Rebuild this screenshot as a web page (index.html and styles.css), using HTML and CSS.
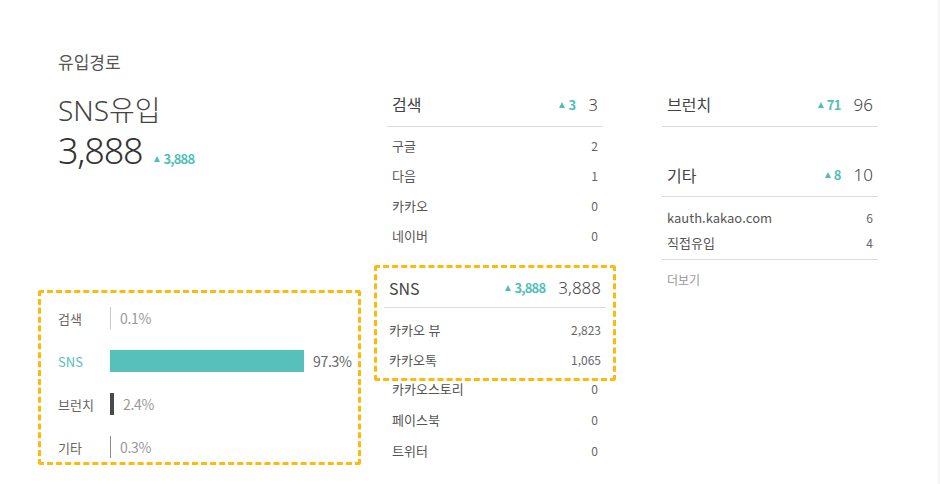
FILE: index.html
```html
<!DOCTYPE html>
<html lang="ko">
<head>
<meta charset="utf-8">
<link rel="stylesheet" href="styles.css">
</head>
<body>
<div class="page">
  <div class="left">
    <div class="summary">
      <div class="title">유입경로</div>
      <div class="big-name">SNS유입</div>
      <div class="big-num"><span class="num">3,888</span><span class="up">3,888</span></div>
    </div>
    <div class="chart">
      <div class="crow"><span class="clabel">검색</span><span class="bar bar-thin light"></span><span class="cval">0.1%</span></div>
      <div class="crow"><span class="clabel teal">SNS</span><span class="bar bar-sns" style="width:194px"></span><span class="cval dark">97.3%</span></div>
      <div class="crow"><span class="clabel">브런치</span><span class="bar bar-br"></span><span class="cval">2.4%</span></div>
      <div class="crow"><span class="clabel">기타</span><span class="bar bar-thin mid"></span><span class="cval">0.3%</span></div>
    </div>
  </div>

  <div class="col mid-col">
    <div class="sec">
      <div class="head"><span class="hname">검색</span><span class="up">3</span><span class="htotal">3</span></div>
      <div class="rows">
        <div class="row"><span>구글</span><span class="v">2</span></div>
        <div class="row"><span>다음</span><span class="v">1</span></div>
        <div class="row"><span>카카오</span><span class="v">0</span></div>
        <div class="row"><span>네이버</span><span class="v">0</span></div>
      </div>
    </div>
    <div class="hl">
      <div class="head head-hl"><span class="hname">SNS</span><span class="up">3,888</span><span class="htotal">3,888</span></div>
      <div class="rows rows-hl">
        <div class="row"><span>카카오 뷰</span><span class="v">2,823</span></div>
        <div class="row"><span>카카오톡</span><span class="v">1,065</span></div>
      </div>
    </div>
    <div class="rows rows-after">
      <div class="row row31"><span>카카오스토리</span><span class="v">0</span></div>
      <div class="row row31"><span>페이스북</span><span class="v">0</span></div>
      <div class="row row31"><span>트위터</span><span class="v">0</span></div>
    </div>
  </div>

  <div class="col right-col">
    <div class="sec">
      <div class="head"><span class="hname">브런치</span><span class="up">71</span><span class="htotal">96</span></div>
    </div>
    <div class="sec sec-etc">
      <div class="head"><span class="hname">기타</span><span class="up">8</span><span class="htotal">10</span></div>
      <div class="rows rows-etc">
        <div class="row row25"><span>kauth.kakao.com</span><span class="v">6</span></div>
        <div class="row row25"><span>직접유입</span><span class="v">4</span></div>
      </div>
      <div class="more">더보기</div>
    </div>
  </div>
</div>
</body>
</html>
```

FILE: styles.css
```css
* { box-sizing: border-box; }
html, body { margin: 0; padding: 0; background: #fff; }
body {
  font-family: "Noto Sans CJK KR", "Noto Sans", sans-serif;
  color: #333;
  width: 940px;
  height: 484px;
  overflow: hidden;
}
.page {
  display: flex;
  width: 940px;
  height: 484px;
  padding-left: 38px;
  border-right: 2px solid #f6f6f6;
}
.left {
  width: 323px;
  display: flex;
  flex-direction: column;
}
.summary {
  padding-left: 20px;
  padding-top: 48px;
}
.title {
  font-size: 17px;
  line-height: 28px;
  color: #555;
}
.big-name {
  margin-top: 14px;
  font-size: 28px;
  line-height: 40px;
  color: #444;
  font-family: "Noto Sans", "Noto Sans CJK KR", sans-serif;
  font-weight: 300;
}
.big-num {
  display: flex;
  align-items: baseline;
  line-height: 42px;
}
.big-num .num {
  font-family: "Noto Sans", "Noto Sans CJK KR", sans-serif;
  font-size: 36px;
  font-weight: 300;
  letter-spacing: -1.2px;
  color: #333;
}
.big-num .up { margin-left: 12px; }

.up {
  color: #4fbfb8;
  font-size: 13px;
  font-weight: 700;
  letter-spacing: -0.8px;
}
.up::before {
  content: "";
  display: inline-block;
  width: 0; height: 0;
  border-left: 3.5px solid transparent;
  border-right: 3.5px solid transparent;
  border-bottom: 6px solid #4fbfb8;
  margin-right: 3px;
  vertical-align: 2px;
}

.chart {
  margin-top: 110px;
  height: 175px;
  border: 3px dashed #fcba0f;
  border-radius: 3px;
  padding: 14px 0 0 17px;
  display: flex;
  flex-direction: column;
  gap: 21px;
}
.crow {
  display: flex;
  align-items: center;
  height: 22px;
}
.clabel {
  width: 52px;
  font-size: 13px;
  color: #666;
}
.clabel.teal { color: #4fbfb8; }
.bar { display: block; height: 22px; }
.bar-thin { width: 1px; }
.bar-thin.light { background: #c8c8c8; }
.bar-thin.mid { background: #8a8a8a; }
.bar-sns { background: #57c0bb; }
.bar-br { width: 4px; background: #4a4a4a; }
.cval {
  margin-left: 9px;
  font-size: 14px;
  color: #999;
  letter-spacing: -0.3px;
}
.cval.dark { color: #666; }

.col {
  width: 216px;
  padding-top: 82px;
}
.mid-col { margin-left: 26px; }
.right-col { margin-left: 59px; }

.head {
  display: flex;
  align-items: center;
  height: 45px;
  padding: 0 5px;
  border-bottom: 1px solid #dcdcdc;
}
.hname {
  font-size: 16px;
  color: #444;
  flex: 1;
}
.htotal {
  font-family: "Noto Sans", "Noto Sans CJK KR", sans-serif;
  font-weight: 300;
  font-size: 17px;
  color: #444;
  margin-left: 13px;
}
.rows { padding-top: 3px; }
.row {
  display: flex;
  justify-content: space-between;
  align-items: center;
  height: 30px;
  padding: 0 5px;
  font-size: 13px;
  color: #555;
}
.row .v { color: #666; font-size: 12px; }

.hl {
  margin: 15px -13px -8px;
  padding: 0 7px 4px;
  border: 3px dashed #fcba0f;
  border-radius: 3px;
}
.head-hl { height: 40px; }
.rows-hl { padding-top: 6px; }
.rows-after { padding-top: 0; }
.row31 { height: 31px; }

.sec-etc { margin-top: 26px; }
.sec-etc .head { height: 44px; }
.rows-etc {
  padding-top: 8px;
  padding-bottom: 4px;
  border-bottom: 1px solid #dcdcdc;
}
.row25 { height: 25px; font-size: 13px; }
.more {
  height: 40px;
  line-height: 40px;
  padding: 0 5px;
  font-size: 12px;
  color: #999;
}
```
